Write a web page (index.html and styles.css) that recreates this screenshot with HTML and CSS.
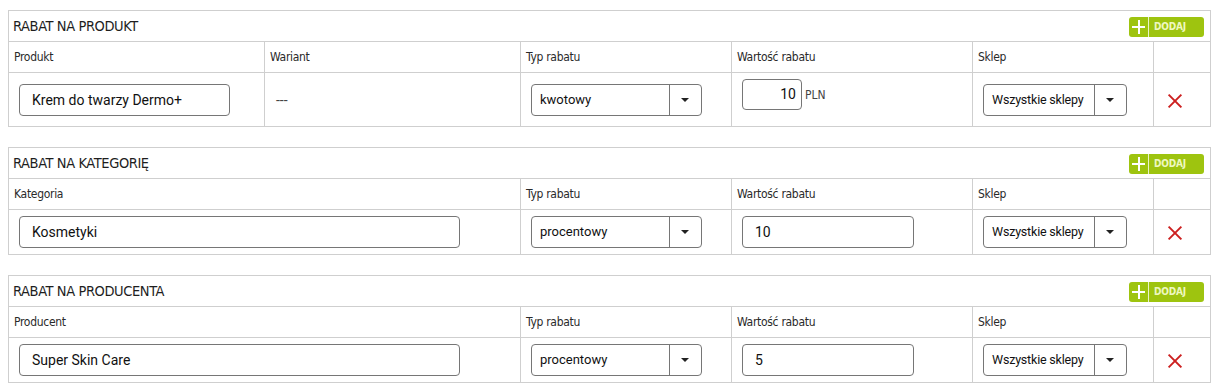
FILE: index.html
```html
<!DOCTYPE html>
<html lang="pl">
<head>
    <meta charset="UTF-8">
    <title>Rabaty</title>
    <link rel="stylesheet" href="styles.css">
</head>
<body>
    <div class="page">
        <!-- Rabat na produkt -->
        <table class="discount">
            <colgroup>
                <col class="c-name"><col class="c-name"><col class="c-type"><col class="c-value"><col class="c-shop"><col class="c-del">
            </colgroup>
            <tr class="title-row">
                <td colspan="6">
                    <div class="title-bar">
                        <span class="title">RABAT NA PRODUKT</span>
                        <button class="add-btn"><span class="plus"></span><span class="add-label">DODAJ</span></button>
                    </div>
                </td>
            </tr>
            <tr class="head-row">
                <td>Produkt</td><td>Wariant</td><td>Typ rabatu</td><td>Wartość rabatu</td><td>Sklep</td><td></td>
            </tr>
            <tr class="body-row tall">
                <td><div class="field w-product">Krem do twarzy Dermo+</div></td>
                <td class="muted">---</td>
                <td><div class="select w-type"><span class="sel-text">kwotowy</span><span class="sel-arrow"></span></div></td>
                <td class="top"><div class="field w-small num">10</div><span class="unit">PLN</span></td>
                <td><div class="select w-shop"><span class="sel-text">Wszystkie sklepy</span><span class="sel-arrow"></span></div></td>
                <td class="del"><span class="cross"></span></td>
            </tr>
        </table>

        <!-- Rabat na kategorię -->
        <table class="discount">
            <colgroup>
                <col class="c-name"><col class="c-name"><col class="c-type"><col class="c-value"><col class="c-shop"><col class="c-del">
            </colgroup>
            <tr class="title-row">
                <td colspan="6">
                    <div class="title-bar">
                        <span class="title">RABAT NA KATEGORIĘ</span>
                        <button class="add-btn"><span class="plus"></span><span class="add-label">DODAJ</span></button>
                    </div>
                </td>
            </tr>
            <tr class="head-row">
                <td colspan="2">Kategoria</td><td>Typ rabatu</td><td>Wartość rabatu</td><td>Sklep</td><td></td>
            </tr>
            <tr class="body-row">
                <td colspan="2"><div class="field w-wide">Kosmetyki</div></td>
                <td><div class="select w-type"><span class="sel-text">procentowy</span><span class="sel-arrow"></span></div></td>
                <td><div class="field w-value">10</div></td>
                <td><div class="select w-shop"><span class="sel-text">Wszystkie sklepy</span><span class="sel-arrow"></span></div></td>
                <td class="del"><span class="cross"></span></td>
            </tr>
        </table>

        <!-- Rabat na producenta -->
        <table class="discount">
            <colgroup>
                <col class="c-name"><col class="c-name"><col class="c-type"><col class="c-value"><col class="c-shop"><col class="c-del">
            </colgroup>
            <tr class="title-row">
                <td colspan="6">
                    <div class="title-bar">
                        <span class="title">RABAT NA PRODUCENTA</span>
                        <button class="add-btn"><span class="plus"></span><span class="add-label">DODAJ</span></button>
                    </div>
                </td>
            </tr>
            <tr class="head-row">
                <td colspan="2">Producent</td><td>Typ rabatu</td><td>Wartość rabatu</td><td>Sklep</td><td></td>
            </tr>
            <tr class="body-row">
                <td colspan="2"><div class="field w-wide">Super Skin Care</div></td>
                <td><div class="select w-type"><span class="sel-text">procentowy</span><span class="sel-arrow"></span></div></td>
                <td><div class="field w-value">5</div></td>
                <td><div class="select w-shop"><span class="sel-text">Wszystkie sklepy</span><span class="sel-arrow"></span></div></td>
                <td class="del"><span class="cross"></span></td>
            </tr>
        </table>
    </div>
</body>
</html>
```

FILE: styles.css
```css
/* Page */
body {
    margin: 8px;
    font-family: "DejaVu Sans Condensed", "DejaVu Sans", sans-serif;
    color: #222;
    background: #fff;
}

.page {
    padding-top: 2px;
}

/* Tables */
.discount {
    width: 1203px;
    border-collapse: collapse;
    table-layout: fixed;
    margin-bottom: 20px;
}

.discount td {
    border: 1px solid #cfcfcf;
    padding: 0 5px;
    vertical-align: middle;
}

.c-name { width: 256px; }
.c-type { width: 211px; }
.c-value { width: 241px; }
.c-shop { width: 181px; }
.c-del { width: 57px; }

/* Title row */
.title-row td {
    height: 30px;
    padding: 0 6px 0 4px;
}

.title-bar {
    display: flex;
    align-items: center;
    justify-content: space-between;
}

.title {
    font-size: 14.5px;
    letter-spacing: -0.4px;
    color: #1e1e1e;
}

.add-btn {
    display: flex;
    align-items: stretch;
    height: 20px;
    width: 75px;
    padding: 0;
    border: none;
    border-radius: 3px;
    background: #9ec40f;
    cursor: pointer;
    margin-top: 1px;
}

.plus {
    position: relative;
    width: 19px;
    border-right: 1px solid #eaf5c8;
}

.plus::before,
.plus::after {
    content: "";
    position: absolute;
    background: #fff;
}

.plus::before {
    left: 3px;
    top: 9px;
    width: 13px;
    height: 2px;
}

.plus::after {
    left: 9px;
    top: 3px;
    width: 2px;
    height: 14px;
}

.add-label {
    padding-left: 5px;
    font-family: "DejaVu Sans Condensed", sans-serif;
    font-size: 10px;
    font-weight: bold;
    line-height: 20px;
    color: #eef8c0;
    letter-spacing: -0.2px;
}

/* Header row */
.head-row td {
    height: 30px;
    font-size: 12px;
    letter-spacing: -0.3px;
    color: #2a2a2a;
}

/* Body rows */
.body-row td {
    height: 44px;
    padding: 0 10px;
    font-family: Roboto, "Liberation Sans", sans-serif;
    font-size: 14px;
    color: #111;
}

.body-row.tall td {
    height: 53px;
}

.body-row.tall td.top {
    height: 47px;
    vertical-align: top;
    padding-top: 6px;
}

.body-row td.muted {
    padding-left: 11px;
    color: #444;
}

.field {
    box-sizing: border-box;
    height: 32px;
    border: 1px solid #767676;
    border-radius: 4px;
    padding: 0 12px;
    line-height: 30px;
    background: #fff;
}

.w-product { width: 211px; }
.w-wide { width: 441px; }
.w-value { width: 172px; }

.w-small {
    display: inline-block;
    width: 60px;
    height: 31px;
    line-height: 29px;
    padding: 0 5px;
}

.num {
    text-align: right;
}

.unit {
    margin-left: 3px;
    font-family: "DejaVu Sans Condensed", sans-serif;
    font-size: 12px;
    color: #444;
}

/* Select */
.select {
    box-sizing: border-box;
    display: flex;
    height: 32px;
    border: 1px solid #767676;
    border-radius: 4px;
    background: #fff;
}

.w-type { width: 171px; }
.w-shop { width: 144px; }

.sel-text {
    flex: 1;
    padding-left: 8px;
    line-height: 30px;
    font-size: 13px;
    white-space: nowrap;
    overflow: hidden;
}

.w-shop .sel-text {
    font-size: 12.5px;
    letter-spacing: -0.2px;
}

.sel-arrow {
    position: relative;
    width: 31px;
    border-left: 1px solid #767676;
}

.sel-arrow::after {
    content: "";
    position: absolute;
    left: 11px;
    top: 13px;
    border-left: 4px solid transparent;
    border-right: 4px solid transparent;
    border-top: 4px solid #222;
}

/* Delete */
.body-row td.del {
    padding: 0 0 0 14px;
}

.cross {
    display: inline-block;
    position: relative;
    width: 14px;
    height: 14px;
    vertical-align: middle;
}

.cross::before,
.cross::after {
    content: "";
    position: absolute;
    left: -2px;
    top: 6px;
    width: 18px;
    height: 2px;
    background: #cc1f1f;
    transform: rotate(45deg);
}

.cross::after {
    transform: rotate(-45deg);
}
```
